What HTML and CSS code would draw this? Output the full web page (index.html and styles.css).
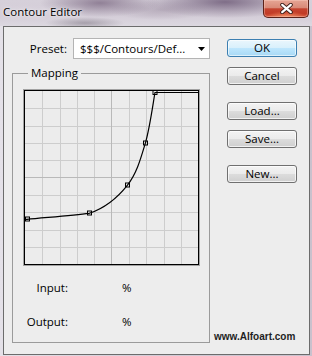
FILE: index.html
```html
<!DOCTYPE html>
<html>
<head>
<meta charset="utf-8">
<link rel="stylesheet" href="styles.css">
</head>
<body>
<div class="window">
  <div class="titlebar">
    <span class="title">Contour Editor</span>
    <button class="close" aria-label="Close">
      <svg width="13" height="11" viewBox="0 0 13 11">
        <path d="M2.2 1.8 L10.8 9.2 M10.8 1.8 L2.2 9.2" stroke="#3a1d18" stroke-width="4" stroke-linecap="round"/>
        <path d="M2.2 1.8 L10.8 9.2 M10.8 1.8 L2.2 9.2" stroke="#ffffff" stroke-width="2.2" stroke-linecap="round"/>
      </svg>
    </button>
  </div>
  <div class="client">
    <div class="left">
      <div class="preset-row">
        <span class="label">Preset:</span>
        <div class="select">
          <span class="select-text">$$$/Contours/Def...</span>
          <svg class="arrow" width="7" height="4" viewBox="0 0 7 4"><path d="M0 0 H7 L3.5 4 Z" fill="#000"/></svg>
        </div>
      </div>
      <fieldset class="group">
        <legend>Mapping</legend>
        <div class="graph">
          <svg width="175" height="175" viewBox="0 0 175 175">
            <rect x="0" y="0" width="175" height="175" fill="#ececec"/>
            <g stroke="#cdcdcd" stroke-width="1" shape-rendering="crispEdges">
              <path d="M18.5 0V175M36.5 0V175M53.5 0V175M70.5 0V175M105.5 0V175M122.5 0V175M140.5 0V175M157.5 0V175"/>
              <path d="M0 18.5H175M0 36.5H175M0 53.5H175M0 70.5H175M0 105.5H175M0 122.5H175M0 140.5H175M0 157.5H175"/>
            </g>
            <g stroke="#b9b9b9" stroke-width="1" shape-rendering="crispEdges">
              <path d="M87.5 0V175M0 87.5H175"/>
            </g>
            <rect x="0.5" y="0.5" width="174" height="174" fill="none" stroke="#000" stroke-width="1" shape-rendering="crispEdges"/>
            <path d="M0 129.6 L3 129.3 C20 127.6 48 125.5 65.3 123.3 C82.1 117.6 94 107 103.3 95.3 C112.6 83.6 116.7 68.8 121.3 53.3 C125.9 37.8 129.4 11 131 2.5 L174 2.5" fill="none" stroke="#000" stroke-width="1.2"/>
            <g fill="none" stroke="#000" stroke-width="1">
              <rect x="1.5" y="127" width="4" height="4"/>
              <rect x="63.5" y="121" width="4" height="4"/>
              <rect x="101.5" y="93" width="4" height="4"/>
              <rect x="119.5" y="51" width="4" height="4"/>
              <rect x="129" y="0.5" width="4" height="4"/>
            </g>
          </svg>
        </div>
        <div class="io">
          <span class="io-label">Input:</span><span class="io-val">%</span>
          <span class="io-label">Output:</span><span class="io-val">%</span>
        </div>
      </fieldset>
    </div>
    <div class="right">
      <button class="btn default">OK</button>
      <button class="btn">Cancel</button>
      <button class="btn gap-big">Load...</button>
      <button class="btn">Save...</button>
      <button class="btn gap-big">New...</button>
      <div class="watermark">www.Alfoart.com</div>
    </div>
  </div>
</div>
</body>
</html>
```

FILE: styles.css
```css
html, body {
  margin: 0;
  padding: 0;
}
body {
  width: 312px;
  height: 356px;
  overflow: hidden;
  font-family: "Open Sans", "Noto Sans", sans-serif;
  font-size: 11.5px;
  color: #000;
}
.window {
  width: 312px;
  height: 356px;
  box-sizing: border-box;
  background: linear-gradient(90deg, #e4e1e8 0%, #d3ccd7 50%, #c9c1cd 100%);
  display: flex;
  flex-direction: column;
}
.titlebar {
  height: 26px;
  flex: none;
  display: flex;
  align-items: flex-start;
  background:
    radial-gradient(ellipse 60px 14px at 100px 3px, rgba(115,95,122,0.7), rgba(115,95,122,0) 100%),
    radial-gradient(ellipse 80px 16px at 225px 2px, rgba(105,85,115,0.8), rgba(105,85,115,0) 100%),
    radial-gradient(ellipse 40px 6px at 85px 23px, rgba(90,80,95,0.4), rgba(90,80,95,0) 100%),
    radial-gradient(ellipse 50px 10px at 160px 10px, rgba(150,135,155,0.45), rgba(150,135,155,0) 100%),
    linear-gradient(180deg, #d6d0da 0%, #d4cdd8 60%, #dcd8e0 100%);
}
.title {
  margin: 4px 0 0 3px;
  line-height: 16px;
  font-size: 11.5px;
  text-shadow: 0 0 6px rgba(255,255,255,0.9), 0 0 2px rgba(255,255,255,0.8);
}
.close {
  margin: 0 3px 0 auto;
  width: 46px;
  height: 18px;
  padding: 0;
  border: 1px solid #5c2219;
  border-top: none;
  border-radius: 0 0 5px 5px;
  background:
    radial-gradient(ellipse 20px 6px at 50% 100%, rgba(255,170,120,0.7), rgba(255,170,120,0)),
    linear-gradient(180deg, #e6a595 0%, #d98a78 45%, #c4432f 52%, #c23b27 80%, #d8573d 100%);
  box-shadow: inset 0 0 0 1px rgba(255,220,210,0.35);
  display: flex;
  align-items: center;
  justify-content: center;
}
.client {
  flex: 1;
  margin: 0 2px 2px 3px;
  border: 1px solid #6c6c6c;
  background: #ededed;
  display: flex;
  padding: 11px 0 11px 8px;
}
.left {
  width: 198px;
  display: flex;
  flex-direction: column;
}
.preset-row {
  height: 21px;
  display: flex;
  justify-content: flex-end;
  align-items: center;
  gap: 6px;
}
.select {
  width: 137px;
  height: 21px;
  box-sizing: border-box;
  border: 1px solid #b4b4b4;
  background: #fff;
  display: flex;
  align-items: center;
  padding: 0 4px 0 6px;
}
.select-text {
  flex: 1;
  line-height: 16px;
}
.arrow {
  display: block;
}
.group {
  margin: 6px 0 0 0;
  padding: 8px 10px 12px 10px;
  border: 1px solid #9b9b9b;
  min-width: 0;
}
.group legend {
  margin-left: 5px;
  padding: 0 3px;
  line-height: 16px;
}
.graph {
  width: 175px;
  height: 175px;
  border: 1px solid #a2a2a2;
}
.graph svg {
  display: block;
}
.io {
  margin-top: 14px;
  display: grid;
  grid-template-columns: 45px auto;
  column-gap: 54px;
  row-gap: 18px;
  line-height: 16px;
}
.io-label {
  text-align: right;
}
.right {
  margin-left: 4px;
  flex: 1;
  display: flex;
  flex-direction: column;
  align-items: flex-start;
  padding-top: 1px;
}
.btn {
  margin-left: 13px;
  width: 70px;
  height: 18px;
  padding: 0;
  border: 1px solid #707070;
  border-radius: 3px;
  background: linear-gradient(180deg, #f3f3f3 0%, #ebebeb 48%, #dcdcdc 52%, #cfcfcf 100%);
  box-shadow: inset 0 0 0 1px rgba(255,255,255,0.7);
  font-family: "Open Sans", "Noto Sans", sans-serif;
  font-size: 11.5px;
  line-height: 14px;
  color: #000;
  margin-bottom: 10px;
}
.btn.default {
  border-color: #3c7fb1;
  background: linear-gradient(180deg, #eaf6fd 0%, #d9f0fc 48%, #bee6fd 52%, #a7d9f5 100%);
  box-shadow: inset 0 0 0 1px rgba(255,255,255,0.6);
}
.btn.gap-big {
  margin-top: 7px;
}
.watermark {
  margin-top: auto;
  font-family: "Liberation Sans", Arial, sans-serif;
  font-weight: bold;
  font-size: 10px;
  line-height: 12px;
  color: #1e1e1e;
}
```
